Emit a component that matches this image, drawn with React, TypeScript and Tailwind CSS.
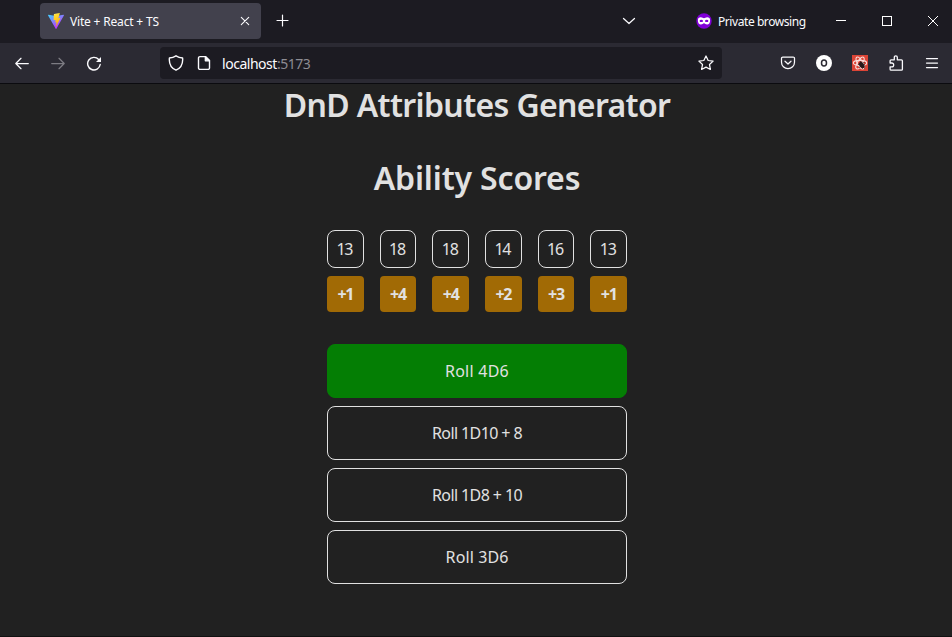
import React from "react";

const scores = [
  { value: 13, modifier: "+1" },
  { value: 18, modifier: "+4" },
  { value: 18, modifier: "+4" },
  { value: 14, modifier: "+2" },
  { value: 16, modifier: "+3" },
  { value: 13, modifier: "+1" },
];

const rolls = [
  { label: "Roll 4D6", active: true, spacing: "tracking-[0.25px]" },
  { label: "Roll 1D10 + 8", active: false, spacing: "tracking-[-0.6px]" },
  { label: "Roll 1D8 + 10", active: false, spacing: "tracking-[-0.6px]" },
  { label: "Roll 3D6", active: false, spacing: "tracking-[0.1px]" },
];

type IconProps = { className?: string; children: React.ReactNode };

function Icon({ className = "", children }: IconProps) {
  return (
    <svg
      viewBox="0 0 16 16"
      fill="none"
      stroke="currentColor"
      strokeWidth="1.25"
      strokeLinecap="round"
      strokeLinejoin="round"
      className={`size-4 shrink-0 ${className}`}
    >
      {children}
    </svg>
  );
}

function ViteLogo() {
  return (
    <svg viewBox="0 0 16 16" className="size-4 shrink-0">
      <defs>
        <linearGradient id="vite-body" x1="0" y1="0" x2="0.6" y2="0.9">
          <stop offset="0" stopColor="#41d1ff" />
          <stop offset="1" stopColor="#bd34fe" />
        </linearGradient>
        <linearGradient id="vite-bolt" x1="0.4" y1="0" x2="0.6" y2="1">
          <stop offset="0" stopColor="#ffea83" />
          <stop offset="0.1" stopColor="#ffdd35" />
          <stop offset="1" stopColor="#ffa800" />
        </linearGradient>
      </defs>
      <path d="M15.9 2.4 8.4 15.7a.4.4 0 0 1-.7 0L.1 2.4a.4.4 0 0 1 .4-.6L8 3.1l7.5-1.3a.4.4 0 0 1 .4.6Z" fill="url(#vite-body)" />
      <path d="M11.6 0 6.1 1.1a.2.2 0 0 0-.2.2l-.3 5.8c0 .1.1.2.2.2l1.6-.4c.1 0 .3.1.2.3l-.4 2.2c0 .2.1.3.2.2l1-.3c.1 0 .3.1.2.3l-.7 3.6c-.1.2.2.3.3.1l4.2-8.1c.1-.1 0-.3-.2-.3l-1.6.3c-.2 0-.3-.1-.2-.2l1.4-4.7c0-.2-.1-.3-.2-.3Z" fill="url(#vite-bolt)" />
    </svg>
  );
}

function TabStrip() {
  return (
    <div className="flex h-[43px] shrink-0 items-center bg-[#1c1b22] pb-px pl-10">
      <div className="flex h-9 w-[221px] items-center rounded bg-[#42414d] pl-2 pr-2">
        <ViteLogo />
        <span className="ml-1.5 whitespace-nowrap pt-0.5 text-[12px] tracking-[-0.18px]">Vite + React + TS</span>
        <Icon className="ml-auto"><path d="m4.3 4.3 7.4 7.4m0-7.4-7.4 7.4" strokeWidth="1.1" /></Icon>
      </div>
      <Icon className="ml-[14px]"><path d="M7.500 2v11M2 7.500h11" strokeWidth="1.2" /></Icon>
      <Icon className="ml-[330px]"><path d="m2.5 5.500 5.500 5 5.500-5" /></Icon>
      <svg viewBox="0 0 16 16" className="ml-[59px] size-4 shrink-0">
        <circle cx="8" cy="8" r="7.7" fill="#8000d7" />
        <path d="M1.900 7.200c0-2 1.100-2.900 2.900-2.900 1.500 0 2.200.9 3.200.9s1.700-.9 3.200-.9c1.800 0 2.900.9 2.900 2.900 0 2.800-1.200 4.300-3 4.300-1.600 0-2-1.300-3.100-1.300s-1.500 1.300-3.100 1.300c-1.800 0-3-1.500-3-4.300Z" fill="#fff" />
        <ellipse cx="5.3" cy="7.9" rx="1.7" ry="1.2" fill="#8000d7" />
        <ellipse cx="10.7" cy="7.9" rx="1.7" ry="1.2" fill="#8000d7" />
      </svg>
      <span className="ml-1.5 w-[100px] whitespace-nowrap pt-0.5 text-[12px] tracking-[-0.43px]">Private browsing</span>
      <svg viewBox="0 0 128 16" className="h-4 w-32 shrink-0" fill="none" stroke="#fff" shapeRendering="crispEdges">
        <path d="M18 7.5h10M64.5 3.5h9v9h-9z" />
        <path d="m110 3 10 10m0-10-10 10" shapeRendering="auto" />
      </svg>
    </div>
  );
}

function Toolbar() {
  return (
    <div className="flex h-[41px] shrink-0 items-center border-b border-[#0b0b0f] bg-[#2b2a33]">
      <Icon className="ml-[14px]"><path d="M14.3 8.500H1.800M7 3.300 1.800 8.500 7 13.700" /></Icon>
      <Icon className="ml-5 text-[#7d7c83]"><path d="M1.700 8.500h12.500M9 3.300 14.200 8.500 9 13.700" /></Icon>
      <Icon className="ml-5">
        <path d="M14.200 9.500A6.300 6.300 0 1 1 12.700 4.500" strokeWidth="1.4" />
        <path d="M15 2v5h-5z" fill="currentColor" stroke="none" />
      </Icon>
      <div className="ml-[58px] flex h-8 w-[562px] items-center rounded bg-[#1c1b22] pl-2 pr-2">
        <Icon><path d="M8 .8c2 1.300 4.200 2 6.600 2.200.5 5.400-1.600 10-6.600 12.200C3 13 .9 8.400 1.400 3 3.800 2.800 6 2.100 8 .8Z" strokeWidth="1.4" /></Icon>
        <Icon className="ml-3"><path d="M4 1.600h5.500l4 4v7.300a1.500 1.500 0 0 1-1.500 1.500H4a1.500 1.500 0 0 1-1.500-1.500V3.100A1.500 1.500 0 0 1 4 1.600Z" strokeWidth="1.4" /><path d="M9.300 1.600v4.200h4.200Z" fill="currentColor" /></Icon>
        <span className="ml-2.5 whitespace-nowrap text-[14px] tracking-[-0.47px]">localhost<span className="text-[#8d8c93]">:5173</span></span>
        <Icon className="ml-auto"><path d="m8 1 2.150 4.500 4.950.65-3.600 3.400.9 4.900L8 12.100l-4.400 2.350.9-4.900L.9 6.150l4.950-.65Z" /></Icon>
      </div>
      <Icon className="ml-[58px]"><path d="M2.800 2h10.400a1.300 1.300 0 0 1 1.300 1.300v3.900a6.500 6.500 0 0 1-13 0V3.300A1.300 1.300 0 0 1 2.800 2ZM5 6.200l3 2.800 3-2.800" /></Icon>
      <svg viewBox="0 0 16 16" className="ml-5 size-4 shrink-0">
        <circle cx="8" cy="8" r="8" fill="#fff" />
        <ellipse cx="8" cy="8.100" rx="2.500" ry="3" fill="none" stroke="#2b2a33" strokeWidth="1.500" />
      </svg>
      <svg viewBox="0 0 16 16" className="ml-5 size-4 shrink-0">
        <path d="M0 0h16v16H0z" fill="#db4436" />
        <g fill="none" stroke="#f9dedb" strokeWidth="1.100">
          <ellipse cx="8" cy="8" rx="6.700" ry="2.600" />
          <ellipse cx="8" cy="8" rx="6.700" ry="2.600" transform="rotate(60 8 8)" />
          <ellipse cx="8" cy="8" rx="6.700" ry="2.600" transform="rotate(120 8 8)" />
        </g>
        <g stroke="#28191b" strokeWidth="0.8">
          <ellipse cx="9.600" cy="10" rx="1.900" ry="3" fill="#28191b" transform="rotate(-35 9.600 10)" />
          <path d="m6 9.500 6.500-2M7 12.500l6-3M8.500 6l4 7.500M10 13.500l3-2" />
        </g>
      </svg>
      <Icon className="ml-5"><path d="M2.100 8V5.800a1 1 0 0 1 1-1h3.200V2.300a1.500 1.500 0 0 1 3 0v2.500h4.100a1 1 0 0 1 1 1v8.400a1 1 0 0 1-1 1H3.100a1 1 0 0 1-1-1v-2.400h1.700a1.900 1.900 0 0 0 0-3.800Z" strokeWidth="1.3" /></Icon>
      <Icon className="ml-5"><path d="M2.500 3.500h11M2.500 8h11M2.500 12.500h11" /></Icon>
    </div>
  );
}

export default function App() {
  return (
    <div className="flex h-[637px] w-[952px] flex-col overflow-hidden border-b border-[#111] bg-[#212121] font-['Noto_Sans',sans-serif] text-[#fbfbfe]">
      <TabStrip />
      <Toolbar />
      <main className="flex flex-1 flex-col items-center pl-0.5 text-[#e1e1e1]">
        <h1 className="mt-[1px] whitespace-nowrap text-[32px] font-semibold leading-10 tracking-[-0.64px]">DnD Attributes Generator</h1>
        <h2 className="mt-[33px] whitespace-nowrap text-[32px] font-semibold leading-10 tracking-[-0.15px]">Ability Scores</h2>
        <div className="mt-8 grid w-[300px] grid-cols-6 gap-x-4">
          {scores.map((score, index) => (
            <div key={index} className="flex flex-col gap-2 text-center text-[16px] tracking-[-1.2px]">
              <div className="flex h-[38px] items-center justify-center rounded-lg border border-[#e1e1e1] pr-0.5">{score.value}</div>
              <div className="flex h-9 items-center justify-center rounded bg-[#a16a05] font-bold">{score.modifier}</div>
            </div>
          ))}
        </div>
        <div className="mt-8 flex w-[300px] flex-col gap-2">
          {rolls.map((roll) => (
            <button
              key={roll.label}
              className={`h-[54px] whitespace-nowrap rounded-lg border text-[16px] ${roll.spacing} ${
                roll.active ? "border-[#047e04] bg-[#047e04]" : "border-[#e1e1e1]"
              }`}
            >
              {roll.label}
            </button>
          ))}
        </div>
      </main>
    </div>
  );
}
